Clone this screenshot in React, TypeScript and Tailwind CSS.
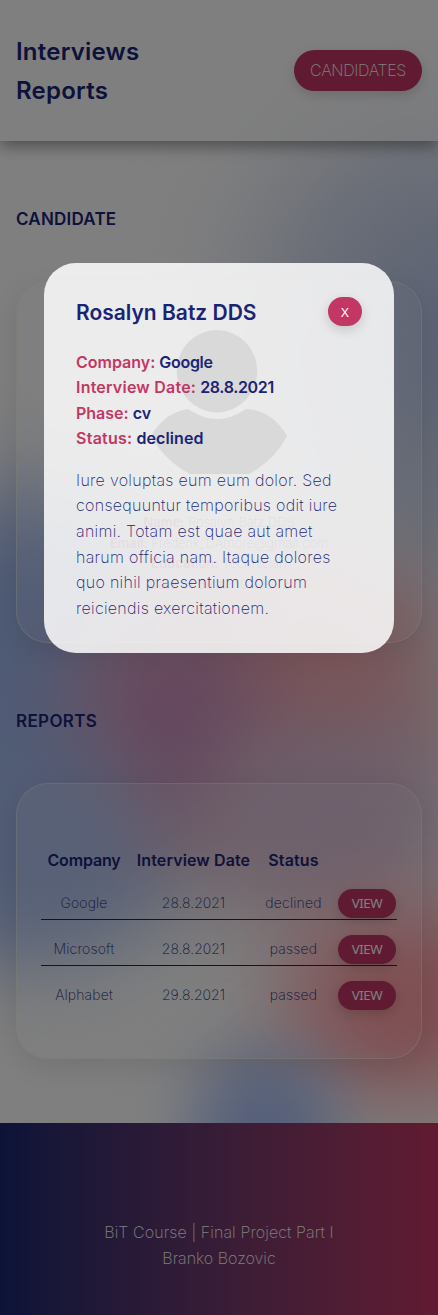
import React from "react";

const reports = [
  { company: "Google", date: "28.8.2021", status: "declined" },
  { company: "Microsoft", date: "28.8.2021", status: "passed" },
  { company: "Alphabet", date: "29.8.2021", status: "passed" },
];

const description = [
  "Iure voluptas eum eum dolor. Sed",
  "consequuntur temporibus odit iure",
  "animi. Totam est quae aut amet",
  "harum officia nam. Itaque dolores",
  "quo nihil praesentium dolorum",
  "reiciendis exercitationem.",
];

const details = [
  { label: "Company:", value: "Google", labelClass: "", valueClass: "tracking-[-0.3px]" },
  {
    label: "Interview Date:",
    value: "28.8.2021",
    labelClass: "tracking-[0.22px]",
    valueClass: "tracking-[-0.35px]",
  },
  { label: "Phase:", value: "cv", labelClass: "", valueClass: "" },
  {
    label: "Status:",
    value: "declined",
    labelClass: "tracking-[0.25px]",
    valueClass: "tracking-[0.1px]",
  },
];

const profile = [
  { label: "Name:", value: "Rosalyn Batz DDS" },
  { label: "Email:", value: "Frederik_DAmore@gmail.com" },
  { label: "Education:", value: "Technician" },
  { label: "Date of Birth:", value: "10.4.1992" },
];

const glass =
  "relative rounded-[32px] border border-[#fafae6]/50 bg-linear-to-br from-white/15 to-white/0 bg-clip-padding shadow-[0_8px_32px_rgba(0,0,0,0.11)]";

function Backdrop() {
  return (
    <div className="absolute inset-0 overflow-hidden">
      <div className="absolute top-[110px] left-[250px] h-[480px] w-[380px] rounded-full bg-[#ced7ec] blur-[60px]" />
      <div className="absolute top-[230px] left-[380px] h-[210px] w-[170px] rounded-full bg-[#b9c6ea] blur-[45px]" />
      <div className="absolute top-[490px] left-[-160px] h-[460px] w-[370px] rounded-full bg-[#9fb7ec] blur-[50px]" />
      <div className="absolute top-[560px] left-[90px] h-[330px] w-[370px] rounded-full bg-[#e6bcc8]/90 blur-[50px]" />
      <div className="absolute top-[570px] left-[180px] h-[190px] w-[240px] rounded-full bg-[#f4aab0] blur-[48px]" />
      <div className="absolute top-[600px] left-[90px] h-[230px] w-[170px] rounded-full bg-[#cb90bc] blur-[45px]" />
      <div className="absolute top-[730px] left-[210px] h-[170px] w-[230px] rounded-full bg-[#d6bcd8]/90 blur-[40px]" />
      <div className="absolute top-[740px] left-[-100px] h-[190px] w-[240px] rounded-full bg-[#a6bcec]/80 blur-[45px]" />
      <div className="absolute top-[905px] left-[285px] h-[190px] w-[250px] rounded-full bg-[#ff9ca4] blur-[45px]" />
      <div className="absolute top-[1050px] left-[190px] h-[150px] w-[150px] rounded-full bg-[#acc0f4] blur-[32px]" />
    </div>
  );
}

function Avatar() {
  return (
    <svg className="h-[144px] w-[136px]" viewBox="0 0 136 144" fill="#050505">
      <ellipse cx="66" cy="41.2" rx="40.3" ry="41.2" />
      <path d="M37 79Q66 99 95 79Q121 80 136 106Q124 130 98 144H39Q14 131 0 106Q13 83 37 79Z" />
    </svg>
  );
}

function Header() {
  return (
    <header className="relative flex h-[141px] shrink-0 items-center justify-between bg-white/60 px-4 shadow-[0_5px_15px_rgba(0,0,0,0.4)]">
      <h1 className="text-[24px] leading-[39px] font-semibold tracking-[0.22px]">
        Interviews
        <br />
        Reports
      </h1>
      <button className="h-[41px] w-32 rounded-[21px] bg-[#c03562] pb-px text-[16px] font-extralight tracking-[-0.35px] text-white shadow-[0_4px_12px_rgba(0,0,0,0.15)]">
        CANDIDATES
      </button>
    </header>
  );
}

function Modal() {
  return (
    <div className="absolute inset-0 flex items-start justify-center bg-black/50 pt-[263px]">
      <div className="h-[390px] w-[350px] rounded-[32px] bg-white/85 px-8 pt-[34px]">
        <div className="flex h-[29px] items-center justify-between">
          <h2 className="pt-[2px] text-[21px] font-semibold">Rosalyn Batz DDS</h2>
          <button className="h-[29px] w-[34px] rounded-[16px] bg-[#c33764] pt-[2px] font-['Noto_Sans','Liberation_Sans',sans-serif] text-[13.33px] text-white shadow-[0_4px_12px_rgba(0,0,0,0.15)]">
            X
          </button>
        </div>
        <div className="mt-[23.5px] text-[16px] leading-[25.6px] font-semibold">
          {details.map((d) => (
            <p key={d.label}>
              <span className={`text-[#c33764] ${d.labelClass}`}>{d.label}</span>{" "}
              <span className={d.valueClass}>{d.value}</span>
            </p>
          ))}
        </div>
        <p className="mt-4 text-[16px] leading-[25.6px] font-extralight tracking-[0.3px] whitespace-nowrap">
          {description.map((line) => (
            <span key={line} className="block">
              {line}
            </span>
          ))}
        </p>
      </div>
    </div>
  );
}

export default function App() {
  return (
    <div className="relative flex h-[1315px] w-full flex-col overflow-hidden bg-white font-['Inter','Liberation_Sans',sans-serif] text-[#1a2474]">
      <Backdrop />
      <Header />
      <main className="relative flex grow flex-col px-4">
        <h3 className="mt-[65px] text-[17px] leading-[27px] font-semibold tracking-[0.22px]">
          CANDIDATE
        </h3>
        <section className={`mt-[48px] flex h-[362px] flex-col items-center pt-12 ${glass}`}>
          <Avatar />
          <div className="mt-[38px] text-center text-[13px] leading-[20.5px] font-extralight">
            {profile.map((p) => (
              <p key={p.label}>
                <span className="font-semibold text-[#c33764]">{p.label}</span> {p.value}
              </p>
            ))}
          </div>
        </section>
        <h3 className="mt-[65px] text-[17px] leading-[27px] font-semibold tracking-[0.35px]">
          REPORTS
        </h3>
        <section className={`mt-[48px] h-[276px] px-6 pt-[63px] ${glass}`}>
          <div className="grid h-[26px] grid-cols-[86px_133px_67px_70px] items-center text-center text-[16px] font-semibold">
            <span className="tracking-[-0.15px]">Company</span>
            <span className="tracking-[0.12px]">Interview Date</span>
            <span className="tracking-[0.15px]">Status</span>
          </div>
          <div className="mt-px">
            {reports.map((r) => (
              <div
                key={r.company}
                className="grid h-[46px] grid-cols-[86px_133px_67px_70px] items-end border-b border-[#1a2474] text-center text-[14px] leading-[32px] font-extralight last:border-transparent"
              >
                <span className="tracking-[0.15px]">{r.company}</span>
                <span>{r.date}</span>
                <span className="tracking-[0.2px]">{r.status}</span>
                <button className="mb-px ml-[11px] h-[29px] w-[58px] rounded-[16px] bg-[#c03562] font-['Noto_Sans','Liberation_Sans',sans-serif] text-[13.33px] leading-[29px] font-normal tracking-[-0.5px] text-white shadow-[0_4px_12px_rgba(0,0,0,0.15)]">
                  VIEW
                </button>
              </div>
            ))}
          </div>
        </section>
      </main>
      <footer className="relative flex h-[192px] shrink-0 flex-col items-center bg-linear-to-r from-[#1a2670] to-[#c33562] pt-[97px] text-[16px] leading-[25.6px] font-extralight text-white">
        <p className="tracking-[0.1px]">BiT Course | Final Project Part I</p>
        <p>Branko Bozovic</p>
      </footer>
      <Modal />
    </div>
  );
}
